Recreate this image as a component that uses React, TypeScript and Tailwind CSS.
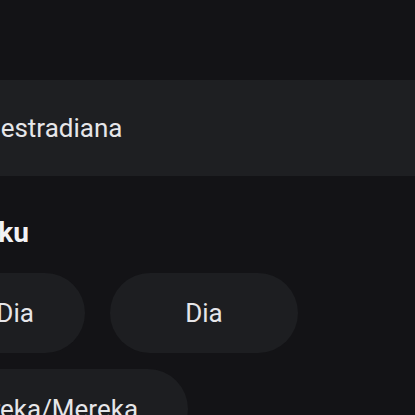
import { useState } from "react";

const pronouns = [
  { label: "Dia/Dia", className: "w-[188px]" },
  { label: "Dia", className: "w-[188px]" },
  { label: "Mereka/Mereka", className: "w-[291px] pl-[8px]" },
];

export default function App() {
  const [selected, setSelected] = useState<string | null>(null);

  return (
    <div className="min-h-screen w-full overflow-hidden bg-[#131316] font-['Roboto',sans-serif] text-[#e6e6e9]">
      <div className="-ml-[103px] w-[calc(100%+103px)] pt-[80px]">
        <div className="flex h-[96px] items-center bg-[#1e1f22] px-[40px] text-[26px]">
          <span>nadiaestradiana</span>
        </div>
        <h2 className="mt-[40px] pl-[27px] text-[28px] leading-[34px] font-bold text-[#f2f2f4]">
          Untukku
        </h2>
        <div className="mt-[23px] flex flex-wrap gap-x-[25px] gap-y-[16px]">
          {pronouns.map((p) => (
            <button
              key={p.label}
              onClick={() => setSelected(p.label)}
              className={`flex h-[80px] items-center justify-center rounded-full bg-[#1d1e21] text-[26px] whitespace-nowrap ${p.className}`}
              style={{ color: selected === p.label ? "#ffffff" : undefined }}
            >
              {p.label}
            </button>
          ))}
        </div>
      </div>
    </div>
  );
}
